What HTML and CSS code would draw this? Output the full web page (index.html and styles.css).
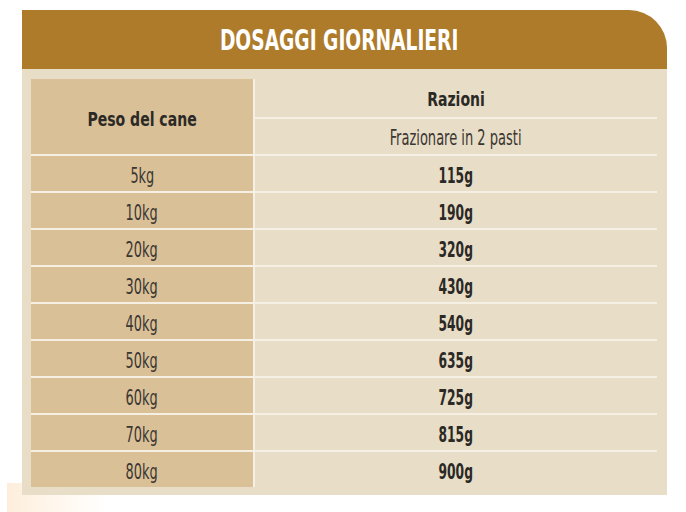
FILE: index.html
```html
<!DOCTYPE html>
<html lang="it">
<head>
<meta charset="utf-8">
<title>Dosaggi giornalieri</title>
<link rel="stylesheet" href="styles.css">
</head>
<body>
<div class="card">
  <div class="title-bar"><span class="cn title">DOSAGGI GIORNALIERI</span></div>
  <div class="panel">
    <div class="grid">
      <div class="cell left head-left"><span class="cn b">Peso del cane</span></div>
      <div class="cell right h1"><span class="cn b">Razioni</span></div>
      <div class="cell right h2"><span class="cn r">Frazionare in 2 pasti</span></div>

      <div class="cell left"><span class="cn nl">5kg</span></div>
      <div class="cell right"><span class="cn nr">115g</span></div>
      <div class="cell left"><span class="cn nl">10kg</span></div>
      <div class="cell right"><span class="cn nr">190g</span></div>
      <div class="cell left"><span class="cn nl">20kg</span></div>
      <div class="cell right"><span class="cn nr">320g</span></div>
      <div class="cell left"><span class="cn nl">30kg</span></div>
      <div class="cell right"><span class="cn nr">430g</span></div>
      <div class="cell left"><span class="cn nl">40kg</span></div>
      <div class="cell right"><span class="cn nr">540g</span></div>
      <div class="cell left"><span class="cn nl">50kg</span></div>
      <div class="cell right"><span class="cn nr">635g</span></div>
      <div class="cell left"><span class="cn nl">60kg</span></div>
      <div class="cell right"><span class="cn nr">725g</span></div>
      <div class="cell left"><span class="cn nl">70kg</span></div>
      <div class="cell right"><span class="cn nr">815g</span></div>
      <div class="cell left"><span class="cn nl">80kg</span></div>
      <div class="cell right"><span class="cn nr">900g</span></div>
    </div>
  </div>
</div>
</body>
</html>
```
FILE: styles.css
```css
html, body {
  margin: 0;
  padding: 0;
}
body {
  width: 686px;
  height: 512px;
  overflow: hidden;
  background-color: #ffffff;
  background-image: linear-gradient(to right, #fdeedb, #fff7ee 50px, #ffffff 100px);
  background-repeat: no-repeat;
  background-size: 100px 29px;
  background-position: 7px 483px;
  font-family: "DejaVu Sans", sans-serif;
  font-stretch: condensed;
  color: #2b2926;
}
.card {
  margin: 10px 0 0 22px;
  width: 645px;
}
.title-bar {
  height: 59px;
  background: #ad7b29;
  border-top-right-radius: 38px;
  display: flex;
  align-items: center;
  justify-content: center;
  padding-right: 10px;
}
.cn {
  display: inline-block;
  white-space: nowrap;
  transform-origin: center;
}
.title {
  color: #ffffff;
  font-weight: bold;
  font-size: 28px;
  transform: scaleX(0.74);
  margin-top: 2px;
}
.panel {
  background: #e8ddc6;
  padding: 10px 10px 8px 9px;
}
.grid {
  display: grid;
  grid-template-columns: 222px 1fr;
  grid-template-rows: 38px 35px repeat(9, 35px);
  gap: 2px;
  background: #f6f0e4;
}
.cell {
  display: flex;
  align-items: center;
  justify-content: center;
}
.left {
  background: #d9c097;
}
.right {
  background: #e8ddc6;
}
.head-left {
  grid-row: span 2;
  padding-top: 4px;
}
.h1 {
  padding-top: 2px;
}
.h2 {
  padding-top: 2px;
}
.b {
  font-weight: bold;
  font-size: 20px;
  transform: scaleX(0.78);
}
.r {
  font-weight: normal;
  font-size: 21px;
  transform: scaleX(0.69);
  color: #3a3632;
}
.nl {
  font-weight: normal;
  font-size: 22px;
  transform: scaleX(0.65);
  color: #3a3632;
  padding-top: 4px;
}
.nr {
  font-weight: bold;
  font-size: 22px;
  transform: scaleX(0.62);
  padding-top: 4px;
}
```
